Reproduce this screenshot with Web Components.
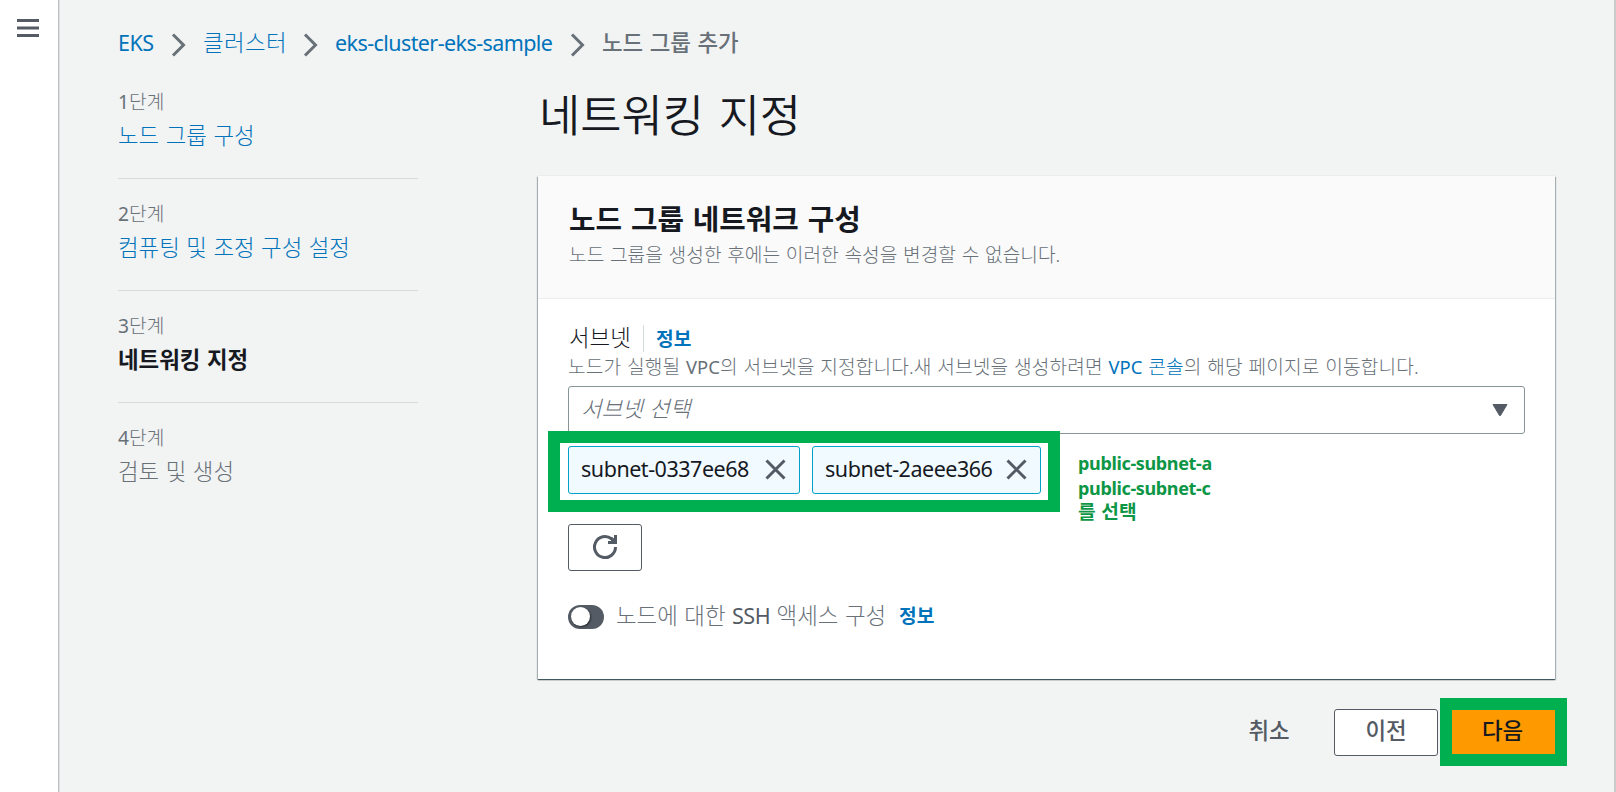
<!DOCTYPE html>
<html lang="ko">
<head>
<meta charset="utf-8">
<title>노드 그룹 추가</title>
<style>
html,body{margin:0;height:100%}
body{font-family:"Noto Sans","Noto Sans CJK KR",sans-serif;font-size:22.4px;font-weight:300;word-spacing:.03em;color:#16191f;overflow:hidden;background:#f2f3f3}
</style>
</head>
<body>
<eks-page></eks-page>
<script>
const define=(name,html)=>{
  const t=document.createElement('template');
  t.innerHTML=html;
  customElements.define(name,class extends HTMLElement{
    constructor(){super();this.attachShadow({mode:'open'}).append(t.content.cloneNode(true));}
  });
};

define('ui-link',`<style>:host{display:inline;color:#0073bb}:host([info]){display:block;font-size:19.2px;font-weight:700}</style><slot></slot>`);

/* Latin runs are set a little tighter than the Hangul around them */
define('latin-run',`<style>:host{font-weight:400;font-size:.96em;letter-spacing:-.022em}:host([plain]){font-size:1em;letter-spacing:0}</style><slot></slot>`);

define('side-rail',`<style>
:host{display:flex;box-sizing:border-box;width:60px;height:792px;background:#fff;border-right:1px solid #dfe1e2;box-shadow:inset -1px 0 0 #bcbfc1;padding:19px 0 0 17px;flex:none}
svg{display:block;width:22px;height:19px}
</style><svg viewBox="0 0 22 19"><path d="M0 1.5h22M0 9h22M0 16.5h22" stroke="#545b64" stroke-width="3"/></svg>`);

define('bread-crumbs',`<style>
:host{display:flex;align-items:center;height:36px;line-height:36px;white-space:nowrap}
svg{width:15px;height:24px;display:block;margin-top:3px;flex:none}
b{color:#687078;font-weight:500;display:block}
ui-link{display:block}
.a{width:53px}.b{width:83px;letter-spacing:.4px}.c{width:218px;letter-spacing:-.03em}.c latin-run{letter-spacing:-.027em}.g1{margin-right:17px}.g2{margin-left:17px;margin-right:17px}
</style>
<ui-link class="a"><latin-run>EKS</latin-run></ui-link>
<svg class="g1" viewBox="0 0 15 24"><path d="M2 1.500l10.500 10.500L2 22.500" fill="none" stroke="#687078" stroke-width="3"/></svg>
<ui-link class="b">클러스터</ui-link>
<svg class="g2" viewBox="0 0 15 24"><path d="M2 1.500l10.500 10.500L2 22.500" fill="none" stroke="#687078" stroke-width="3"/></svg>
<ui-link class="c"><latin-run>eks-cluster-eks-sample</latin-run></ui-link>
<svg class="g2" viewBox="0 0 15 24"><path d="M2 1.500l10.500 10.500L2 22.500" fill="none" stroke="#687078" stroke-width="3"/></svg>
<b>노드 그룹 추가</b>`);

define('wizard-step',`<style>
:host{display:block;box-sizing:border-box;height:112px;border-bottom:1px solid #d5dbdb;color:#687078;padding-top:20px;white-space:nowrap}
:host([last]){border:0}
small{display:block;font-size:19.2px;line-height:30px;height:30px}
div{line-height:36px;margin-top:1px}
:host([link]) div{color:#0073bb}
:host([active]) div{color:#16191f;font-weight:600}
</style><small><slot name="n"></slot></small><div><slot></slot></div>`);

define('wizard-nav',`<style>:host{display:block;width:300px;flex:none}</style>
<wizard-step link><span slot="n"><latin-run plain>1</latin-run>단계</span>노드 그룹 구성</wizard-step>
<wizard-step link><span slot="n"><latin-run plain>2</latin-run>단계</span>컴퓨팅 및 조정 구성 설정</wizard-step>
<wizard-step active><span slot="n"><latin-run plain>3</latin-run>단계</span>네트워킹 지정</wizard-step>
<wizard-step last><span slot="n"><latin-run plain>4</latin-run>단계</span>검토 및 생성</wizard-step>`);

define('subnet-token',`<style>
:host{display:flex;align-items:center;box-sizing:border-box;height:48px;border:1px solid #00a1c9;border-radius:3px;background:#f1faff;padding:0 13px 3px 12px;justify-content:space-between;white-space:nowrap}
svg{width:21px;height:21px;display:block;margin-top:1px}
</style><latin-run><slot></slot></latin-run><svg viewBox="0 0 21 21"><path d="M1.5 1.5l18 18M19.5 1.5l-18 18" stroke="#545b64" stroke-width="3"/></svg>`);

define('subnet-select',`<style>
:host{display:flex;align-items:center;justify-content:space-between;box-sizing:border-box;height:48px;border:1px solid #879596;border-radius:3px;background:#fff;padding:0 16px 5px 12px;color:#687078;font-style:italic}
svg{width:16px;height:12px;display:block;margin-top:5px}
</style><span><slot></slot></span><svg viewBox="0 0 16 12"><path d="M1 .5h14L8.5 11.5h-1z" fill="#545b64" stroke="#545b64" stroke-linejoin="round"/></svg>`);

define('ui-button',`<style>
:host{display:flex;align-items:center;justify-content:center;box-sizing:border-box;height:47px;border:1px solid #545b64;border-radius:3px;background:#fff;color:#545b64;font-weight:500;padding-bottom:6px}
:host([icon]){padding-bottom:2px}
:host([plain]){border-color:transparent;background:none}
:host([primary]){border:0;border-radius:0;background:#f90;color:#16191f;height:44px;padding:0 2px 5px 0}
</style><slot></slot>`);

define('ui-toggle',`<style>
:host{display:flex;box-sizing:border-box;width:36px;height:24px;border-radius:12px;background:#545b64;padding:2.5px}
i{width:19px;height:19px;border-radius:50%;background:#fff;box-shadow:1px 1px 2px rgba(0,0,0,.5)}
</style><i></i>`);

define('mark-box',`<style>:host{display:block;box-sizing:border-box;border:12px solid #00b050}</style><slot></slot>`);

define('network-panel',`<style>
:host{display:block;position:relative;width:1017px;height:503px;background:#fff;box-shadow:0 1px 1px 0 rgba(0,28,36,.5),1px 1px 1px 0 rgba(0,28,36,.25),-1px 1px 1px 0 rgba(0,28,36,.25),0 -1px 0 0 #eaeded}
header{box-sizing:border-box;height:123px;background:#fafafa;border-bottom:1px solid #eaeded;padding:23px 30px 0 31px;white-space:nowrap}
h2{margin:0;font-size:28.8px;line-height:40px;height:41px;font-weight:700;word-spacing:.05em}
p{margin:0;font-size:19.2px;line-height:30px;color:#687078;white-space:nowrap}
main{padding:24px 30px 0 30px}
.l{display:flex;align-items:center;height:30px;padding-left:1px;white-space:nowrap}
.l span{padding-right:14px;border-right:1px solid #d5dbdb;line-height:26px;height:27px;margin-right:13px;width:60px}
.l ui-link{margin-left:-1px}
main>p{padding-left:0;height:33px;line-height:28px;letter-spacing:.1px}
main>p latin-run{letter-spacing:0}
.tokens{margin:-3px 0 0 -20px;width:512px;height:81px;padding:3px 7px 6px 8px;position:relative;display:flex;gap:12px}
.t1{width:232px}.t2{width:229px}
.note{position:absolute;left:540px;top:275px;font-size:19.2px;line-height:24.5px;color:#0d9645;font-weight:700;white-space:nowrap}
.note span{font-size:18px;letter-spacing:-.35px}
.re{width:74px;margin-top:12px}
.re svg{width:26px;height:26px;display:block}
.ssh{display:flex;align-items:center;height:36px;margin-top:26px;color:#687078;white-space:nowrap}
.ssh ui-toggle{margin-right:12px;margin-top:3px}
.ssh span{width:283px;margin-top:-1px}
.ssh latin-run{color:#545b64}
</style>
<header><h2>노드 그룹 네트워크 구성</h2><p>노드 그룹을 생성한 후에는 이러한 속성을 변경할 수 없습니다.</p></header>
<main>
<div class="l"><span>서브넷</span><ui-link info>정보</ui-link></div>
<p>노드가 실행될 <latin-run>VPC</latin-run>의 서브넷을 지정합니다.새 서브넷을 생성하려면 <ui-link><latin-run>VPC</latin-run> 콘솔</ui-link>의 해당 페이지로 이동합니다.</p>
<subnet-select>서브넷 선택</subnet-select>
<mark-box class="tokens"><subnet-token class="t1">subnet-0337ee68</subnet-token><subnet-token class="t2">subnet-2aeee366</subnet-token></mark-box>
<ui-button icon class="re"><svg viewBox="0 0 26 26"><path d="M23.500 13A10.500 10.500 0 1 1 19.500 4.800L22 7.300" fill="none" stroke="#545b64" stroke-width="3"/><path d="M22 1h3v9h-9V7h3.500L18 5l2-2 2 1.500z" fill="#545b64"/></svg></ui-button>
<div class="ssh"><ui-toggle></ui-toggle><span>노드에 대한 <latin-run>SSH</latin-run> 액세스 구성</span><ui-link info>정보</ui-link></div>
</main>
<div class="note"><span>public-subnet-a</span><br><span>public-subnet-c</span><br>를 선택</div>`);

define('wizard-actions',`<style>
:host{display:flex;justify-content:flex-end;align-items:flex-start;margin-top:19px;width:1029px;height:68px}
.c{width:82px;margin-top:11px;margin-right:24px}.p{width:104px;margin-top:11px;margin-right:2px}.n{width:127px;height:68px}
</style>
<ui-button plain class="c">취소</ui-button><ui-button class="p">이전</ui-button><mark-box class="n"><ui-button primary>다음</ui-button></mark-box>`);

define('eks-page',`<style>
:host{display:flex;width:1616px;height:792px;overflow:hidden;background:#f2f3f3}
.content{box-sizing:border-box;flex:1;padding:25px 0 0 58px;border-right:2px solid #c9cccd}
.cols{display:flex;gap:120px}
wizard-nav{margin-top:6px}
h1{margin:0;font-size:44.8px;font-weight:350;line-height:64px;padding:22px 0 29px 1px;height:64px;word-spacing:.07em}
</style>
<side-rail></side-rail>
<div class="content">
<bread-crumbs></bread-crumbs>
<div class="cols"><wizard-nav></wizard-nav><section><h1>네트워킹 지정</h1><network-panel></network-panel><wizard-actions></wizard-actions></section></div>
</div>`);
</script>
</body>
</html>
